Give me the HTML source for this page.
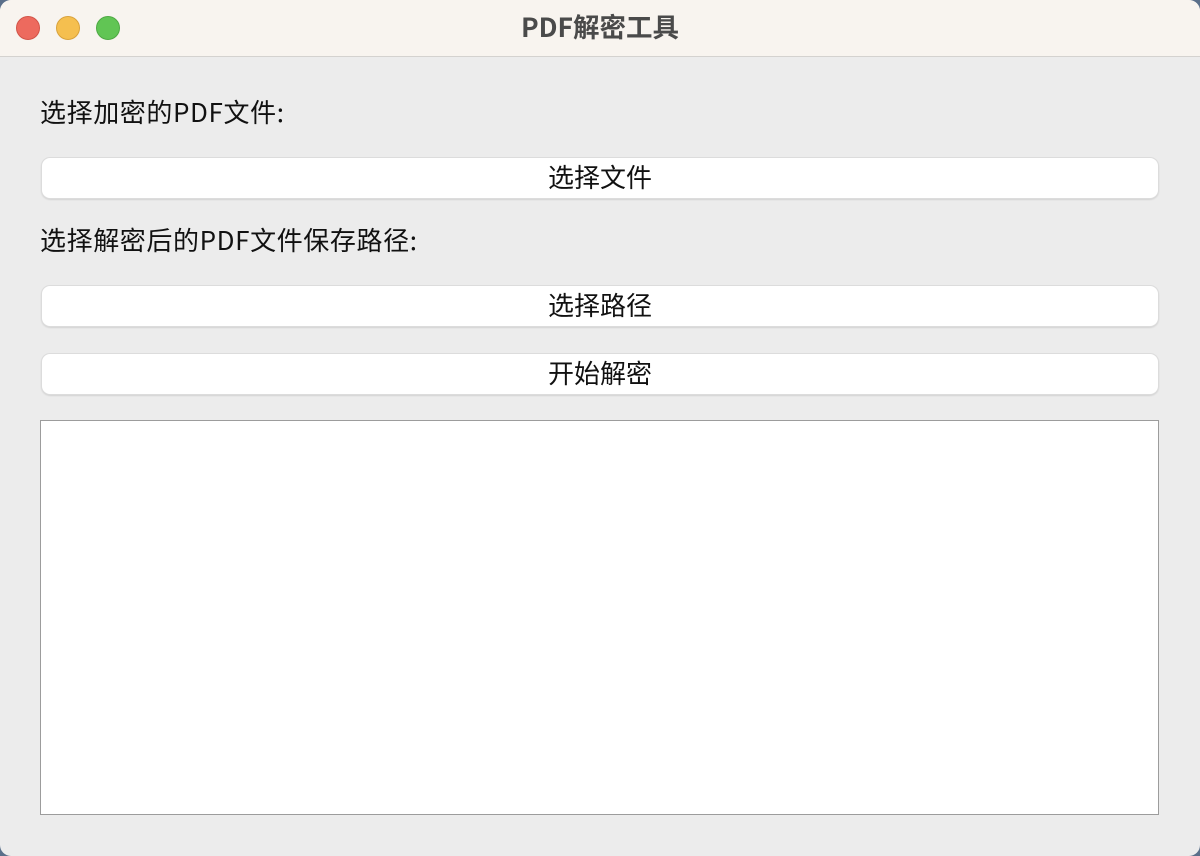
<!DOCTYPE html>
<html><head><meta charset="utf-8"><style>
*{margin:0;padding:0;box-sizing:border-box}
body{width:1200px;height:856px;background:#5a6f8a;overflow:hidden;font-family:"Noto Sans CJK SC","Liberation Sans",sans-serif}
.win{position:absolute;left:0;top:0;width:1200px;height:856px;background:#ececec;border-radius:11px;overflow:hidden}
.tb{height:57px;background:#f8f4ef;border-bottom:1px solid #d4d2cf;position:relative}
.tb .t{position:absolute;left:0;right:0;top:8px;text-align:center;font-size:26.5px;line-height:36px;font-weight:bold;color:#4a4a4a}
.dot{position:absolute;top:16px;width:24px;height:24px;border-radius:50%}
.lbl{position:absolute;left:40px;font-size:26px;line-height:30px;color:#111;letter-spacing:0.6px}
.btn{position:absolute;left:42px;width:1116px;height:40px;background:#fff;border-radius:8px;box-shadow:0 0 0 1px #dcdcdc,0 1px 2px rgba(0,0,0,.25);text-align:center;font-size:26px;line-height:38px;color:#111}
.ta{position:absolute;left:40px;top:420px;width:1119px;height:395px;background:#fff;border:1px solid #9c9c9c}
</style></head><body>
<div class="win">
<div class="tb">
<div class="dot" style="left:16px;background:#ed6a5e;border:1px solid #d25448"></div>
<div class="dot" style="left:56px;background:#f5bf4f;border:1px solid #d9a23b"></div>
<div class="dot" style="left:96px;background:#61c554;border:1px solid #4ea943"></div>
<div class="t">PDF解密工具</div>
</div>
<div class="lbl" style="top:97px">选择加密的PDF文件:</div>
<div class="btn" style="top:158px">选择文件</div>
<div class="lbl" style="top:225px">选择解密后的PDF文件保存路径:</div>
<div class="btn" style="top:286px">选择路径</div>
<div class="btn" style="top:354px">开始解密</div>
<div class="ta"></div>
</div>
</body></html>
